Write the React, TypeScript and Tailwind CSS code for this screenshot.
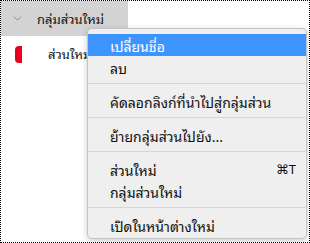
import { ChevronDown } from 'lucide-react'

const font = {
  fontFamily: '"Noto Sans Thai Looped", "Noto Sans Thai", "Noto Sans", Tahoma, "DejaVu Sans", sans-serif',
}

function Sep() {
  return <div className="mt-[5px] mb-[6px] h-px bg-[#d6d6d6]" />
}

function Item({ label, active, shortcut }: { label: string; active?: boolean; shortcut?: string }) {
  return (
    <div
      className={`flex h-[22px] items-center justify-between pl-[22px] pr-[10px] text-[14px] ${
        active ? 'bg-[#3d94ff] text-white' : 'text-[#111111]'
      }`}
    >
      <span>{label}</span>
      {shortcut && <span className="text-[13px]">{shortcut}</span>}
    </div>
  )
}

export default function App() {
  return (
    <div className="relative h-[243px] w-[310px] overflow-hidden border border-dotted border-black bg-white" style={font}>
      <div className="flex h-[35px] w-[127px] items-center gap-[13px] bg-[#d3d3d3] pl-[10px]">
        <ChevronDown className="h-[13px] w-[13px] text-[#7a7a7a]" strokeWidth={1.5} />
        <span className="text-[13px] text-[#111111]">กลุ่มส่วนใหม่</span>
      </div>
      <div className="flex h-[36px] items-center">
        <div className="ml-[14px] h-[17px] w-[7px] rounded-l-[4px] bg-[#e8001c]" />
        <span className="ml-[26px] text-[13px] text-[#111111]">ส่วนใหม่</span>
      </div>

      <div className="absolute left-[86px] top-[27px] w-[220px] rounded-[5px] border border-[#c4c4c4] bg-[#efefef] pb-[2px] pt-[5px] shadow-[0_2px_6px_rgba(0,0,0,0.2)]">
        <Item label="เปลี่ยนชื่อ" active />
        <Item label="ลบ" />
        <Sep />
        <Item label="คัดลอกลิงก์ที่นำไปสู่กลุ่มส่วน" />
        <Sep />
        <Item label="ย้ายกลุ่มส่วนไปยัง..." />
        <Sep />
        <Item label="ส่วนใหม่" shortcut="⌘T" />
        <Item label="กลุ่มส่วนใหม่" />
        <Sep />
        <Item label="เปิดในหน้าต่างใหม่" />
      </div>
    </div>
  )
}
